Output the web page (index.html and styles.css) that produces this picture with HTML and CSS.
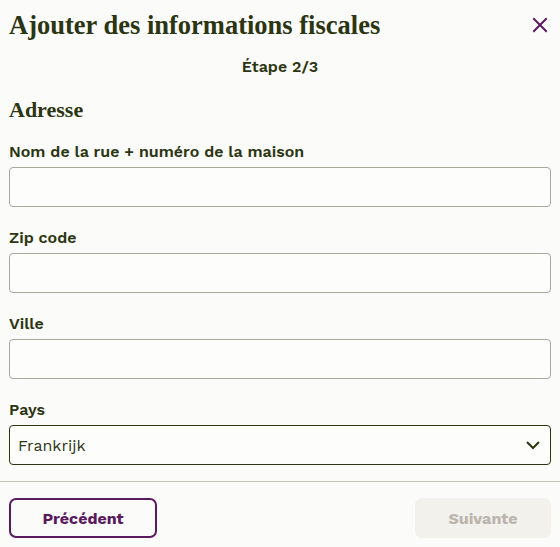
FILE: index.html
```html
<!DOCTYPE html>
<html lang="fr">
<head>
<meta charset="utf-8">
<link rel="stylesheet" href="styles.css">
</head>
<body>
<div class="modal">
  <div class="header">
    <h1 class="title">Ajouter des informations fiscales</h1>
    <button class="close" aria-label="Fermer">
      <svg width="16" height="16" viewBox="0 0 16 16"><path d="M2 2 L14 14 M14 2 L2 14" stroke="#5a1a5e" stroke-width="2" stroke-linecap="square"/></svg>
    </button>
  </div>
  <div class="step">Étape 2/3</div>
  <h2 class="section">Adresse</h2>
  <div class="fields">
    <div class="field">
      <label class="label">Nom de la rue + numéro de la maison</label>
      <div class="input"></div>
    </div>
    <div class="field">
      <label class="label">Zip code</label>
      <div class="input"></div>
    </div>
    <div class="field">
      <label class="label">Ville</label>
      <div class="input"></div>
    </div>
    <div class="field">
      <label class="label">Pays</label>
      <div class="input select">
        <span>Frankrijk</span>
        <svg width="16" height="10" viewBox="0 0 16 10"><path d="M2 2 L8 8 L14 2" fill="none" stroke="#2b3512" stroke-width="2"/></svg>
      </div>
    </div>
  </div>
  <div class="footer">
    <button class="btn prev">Précédent</button>
    <button class="btn next">Suivante</button>
  </div>
</div>
</body>
</html>
```
FILE: styles.css
```css
html, body {
  margin: 0;
  padding: 0;
  background: #fbfbf9;
}
.modal {
  width: 560px;
  height: 547px;
  box-sizing: border-box;
  font-family: "Work Sans", "Open Sans", sans-serif;
  color: #2b3512;
}
.header {
  display: flex;
  justify-content: space-between;
  align-items: center;
  padding: 0 12px 0 9px;
  height: 50px;
}
.title {
  margin: 0;
  font-family: "Liberation Serif", serif;
  font-weight: bold;
  font-size: 26.5px;
  color: #2b3512;
}
.close {
  border: 0;
  background: none;
  padding: 0;
  width: 16px;
  height: 16px;
  display: flex;
}
.step {
  text-align: center;
  font-size: 16px;
  font-weight: 600;
  line-height: 20px;
  margin-top: 7px;
}
.section {
  margin: 21px 9px 0;
  font-family: "Liberation Serif", serif;
  font-weight: 600;
  font-size: 22px;
  line-height: 24px;
  color: #2b3512;
}
.fields {
  margin-top: 20px;
  display: flex;
  flex-direction: column;
  gap: 21px;
  padding: 0 9px;
}
.field {
  display: flex;
  flex-direction: column;
  gap: 5px;
}
.label {
  font-size: 16px;
  font-weight: 600;
  line-height: 20px;
}
.input {
  height: 40px;
  box-sizing: border-box;
  border: 1px solid #a8a89c;
  border-radius: 4px;
  background: #fdfdfc;
}
.select {
  border-color: #2b3512;
  display: flex;
  align-items: center;
  justify-content: space-between;
  padding: 0 9px 0 8px;
  font-size: 16px;
  color: #2b3512;
}
.footer {
  margin-top: 16px;
  border-top: 1px solid #c4c4bc;
  padding: 16px 9px 0;
  display: flex;
  justify-content: space-between;
}
.btn {
  height: 40px;
  box-sizing: border-box;
  border-radius: 7px;
  font-family: "Work Sans", "Open Sans", sans-serif;
  font-weight: 700;
  font-size: 16px;
}
.prev {
  width: 148px;
  border: 2px solid #5a1a5e;
  background: #fbfbf9;
  color: #5a1a5e;
}
.next {
  width: 136px;
  border: 0;
  background: #f2f1ec;
  color: #bab5ae;
}
```
